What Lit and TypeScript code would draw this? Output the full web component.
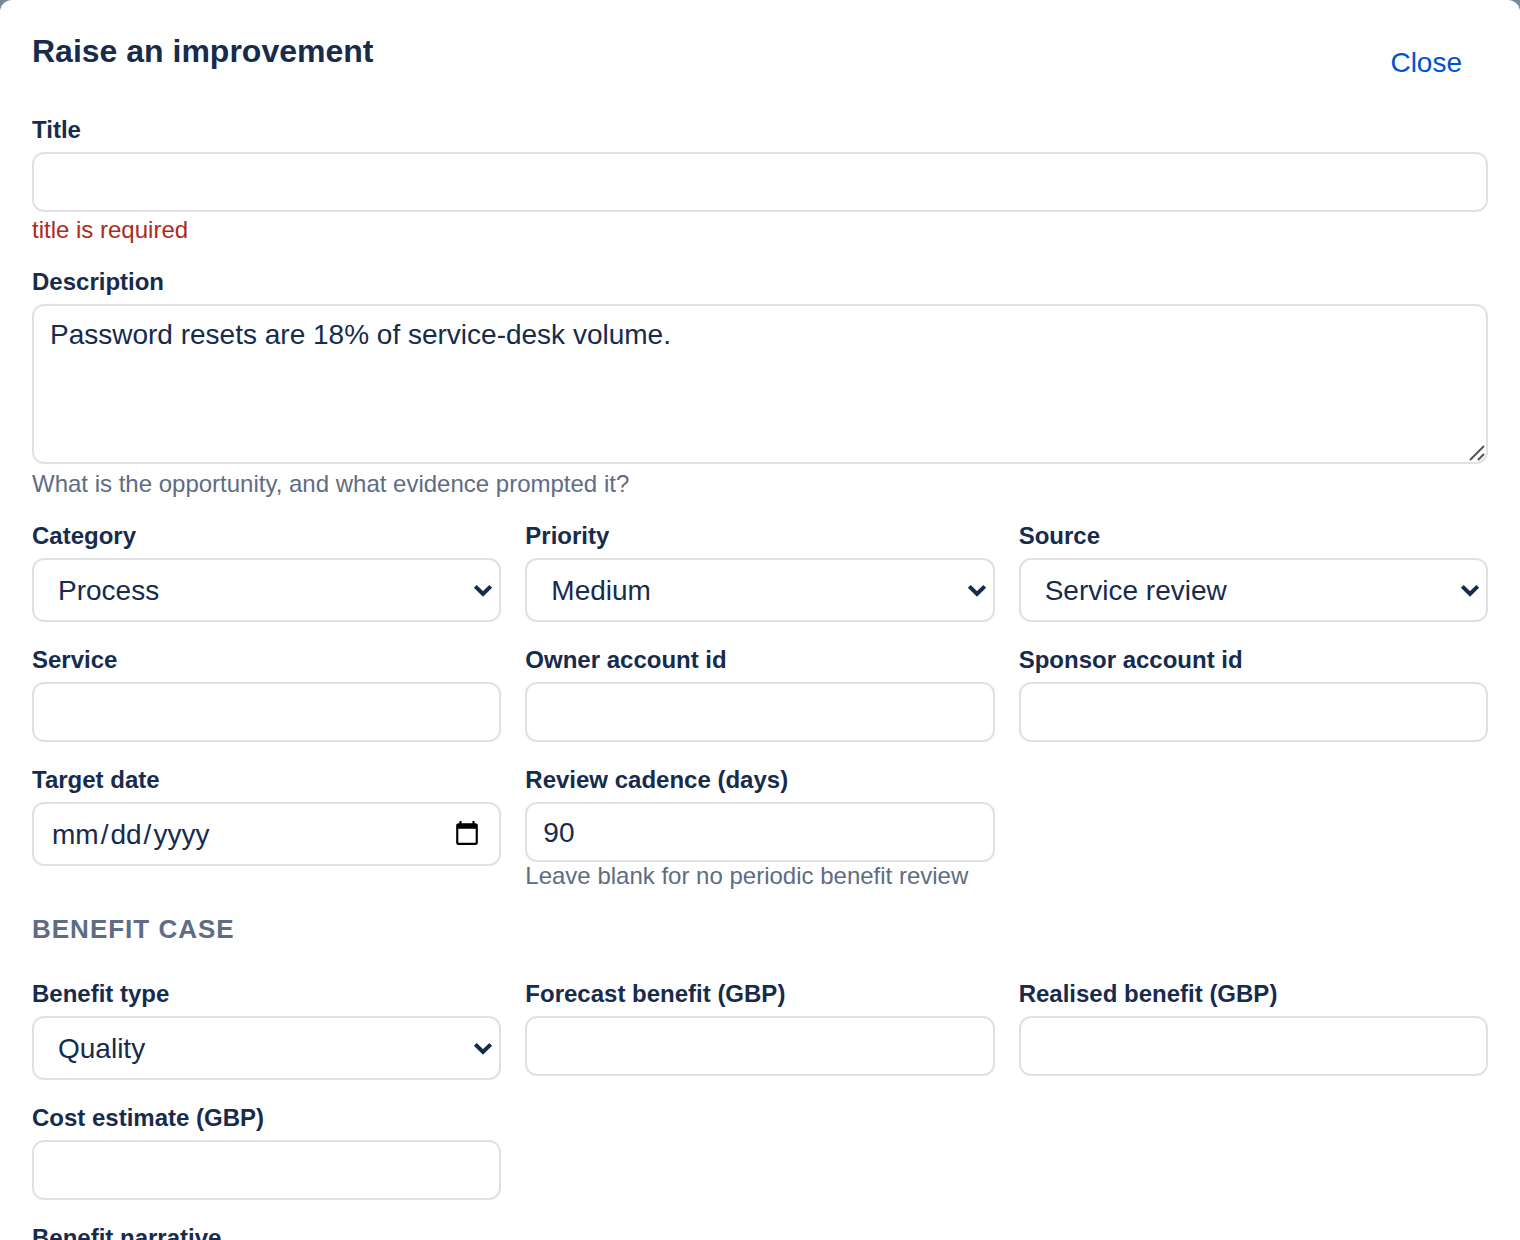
import { LitElement, html, css, nothing } from "lit";
import { customElement } from "lit/decorators.js";

interface Field {
  id: string;
  label: string;
  kind: "text" | "number" | "date" | "select" | "textarea";
  value?: string;
  options?: string[];
  hint?: string;
  error?: string;
}

const intro: Field[] = [
  { id: "title", label: "Title", kind: "text", error: "title is required" },
  {
    id: "description",
    label: "Description",
    kind: "textarea",
    value: "Password resets are 18% of service-desk volume.",
    hint: "What is the opportunity, and what evidence prompted it?",
  },
];

const details: Field[] = [
  { id: "category", label: "Category", kind: "select", options: ["Process"] },
  { id: "priority", label: "Priority", kind: "select", options: ["Medium"] },
  { id: "source", label: "Source", kind: "select", options: ["Service review"] },
  { id: "service", label: "Service", kind: "text" },
  { id: "owner", label: "Owner account id", kind: "text" },
  { id: "sponsor", label: "Sponsor account id", kind: "text" },
  { id: "target", label: "Target date", kind: "date" },
  {
    id: "cadence",
    label: "Review cadence (days)",
    kind: "number",
    value: "90",
    hint: "Leave blank for no periodic benefit review",
  },
];

const benefit: Field[] = [
  { id: "benefit-type", label: "Benefit type", kind: "select", options: ["Quality"] },
  { id: "forecast", label: "Forecast benefit (GBP)", kind: "number" },
  { id: "realised", label: "Realised benefit (GBP)", kind: "number" },
  { id: "cost", label: "Cost estimate (GBP)", kind: "number" },
];

const narrative: Field = { id: "narrative", label: "Benefit narrative", kind: "textarea" };

@customElement("app-root")
export class AppRoot extends LitElement {
  static styles = css`
    :host {
      display: block;
      height: 100vh;
      overflow: hidden;
      background: #7a869a;
      color: #172b4d;
      font-family: "Liberation Sans", Arial, sans-serif;
    }
    * {
      box-sizing: border-box;
    }
    .dialog {
      height: 100%;
      padding: 32px;
      overflow-y: auto;
      scrollbar-width: none;
      border-radius: 12px 12px 0 0;
      background: #fff;
    }
    .header {
      display: flex;
      align-items: flex-start;
      justify-content: space-between;
      margin-bottom: 24px;
    }
    .heading {
      margin: 0;
      font-size: 32px;
      line-height: 38px;
    }
    .close {
      padding: 13px 24px 11px;
      border: 2px solid transparent;
      border-radius: 12px;
      background: transparent;
      color: #0052cc;
      font: inherit;
      font-size: 28px;
      line-height: 32px;
      cursor: pointer;
    }
    .form,
    .grid {
      display: grid;
      gap: 24px;
    }
    .grid {
      grid-template-columns: repeat(3, minmax(0, 1fr));
    }
    .field {
      display: flex;
      flex-direction: column;
    }
    .label {
      margin-bottom: 8px;
      font-size: 24px;
      font-weight: 700;
      line-height: 28px;
    }
    .box {
      display: grid;
      position: relative;
    }
    .control {
      width: 100%;
      min-width: 0;
      margin: 0;
      padding: 13px 16px 11px;
      border: 2px solid #dfe1e6;
      border-radius: 12px;
      background: #fff;
      color: inherit;
      font: inherit;
      font-size: 28px;
      line-height: 32px;
      appearance: none;
    }
    .number {
      appearance: textfield;
    }
    .select {
      padding: 15px 24px 13px;
    }
    .date {
      height: 64px;
    }
    .date::-webkit-datetime-edit-month-field,
    .date::-webkit-datetime-edit-day-field,
    .date::-webkit-datetime-edit-year-field {
      padding-inline: 2px;
    }
    .date::-webkit-calendar-picker-indicator {
      margin-bottom: 2px;
    }
    .textarea {
      height: 160px;
      resize: none;
    }
    .chevron,
    .grip {
      position: absolute;
      pointer-events: none;
    }
    .chevron {
      top: 25px;
      right: 8px;
    }
    .grip {
      right: 2px;
      bottom: 2px;
    }
    .hint,
    .error {
      margin: 0;
      font-size: 24px;
      line-height: 28px;
    }
    .hint {
      color: #5e6c84;
    }
    .textarea-hint {
      margin-top: 6px;
    }
    .error {
      margin-top: 4px;
      color: #ae2a19;
    }
    .section {
      margin: 0 0 12px;
      color: #5e6c84;
      font-size: 26px;
      line-height: 30px;
      letter-spacing: 1px;
      text-transform: uppercase;
    }
  `;

  private control(f: Field) {
    switch (f.kind) {
      case "select":
        return html`<select class="control select" id=${f.id}>
            ${f.options?.map((o) => html`<option>${o}</option>`)}
          </select>
          <svg class="chevron" width="20" height="14" viewBox="0 0 20 14" aria-hidden="true">
            <path d="M2.3 3.3 10 11l7.7-7.7" fill="none" stroke="#172b4d" stroke-width="4" />
          </svg>`;
      case "textarea":
        return html`<textarea class="control textarea" id=${f.id} .value=${f.value ?? ""}></textarea>
          <svg class="grip" width="18" height="18" viewBox="0 0 18 18" aria-hidden="true">
            <path d="M2 16 16 2M10 16l6-6" fill="none" stroke="#555" stroke-width="2" />
          </svg>`;
      default:
        return html`<input class="control ${f.kind}" id=${f.id} type=${f.kind} .value=${f.value ?? ""} />`;
    }
  }

  private field(f: Field) {
    return html`<div class="field">
      <label class="label" for=${f.id}>${f.label}</label>
      <div class="box">${this.control(f)}</div>
      ${f.hint
        ? html`<p class="hint ${f.kind === "textarea" ? "textarea-hint" : ""}">${f.hint}</p>`
        : nothing}
      ${f.error ? html`<p class="error">${f.error}</p>` : nothing}
    </div>`;
  }

  render() {
    return html`<main class="dialog" role="dialog" aria-labelledby="heading">
      <header class="header">
        <h2 class="heading" id="heading">Raise an improvement</h2>
        <button class="close" type="button">Close</button>
      </header>
      <form class="form">
        ${intro.map((f) => this.field(f))}
        <div class="grid">${details.map((f) => this.field(f))}</div>
        <h3 class="section">Benefit case</h3>
        <div class="grid">${benefit.map((f) => this.field(f))}</div>
        ${this.field(narrative)}
      </form>
    </main>`;
  }
}
